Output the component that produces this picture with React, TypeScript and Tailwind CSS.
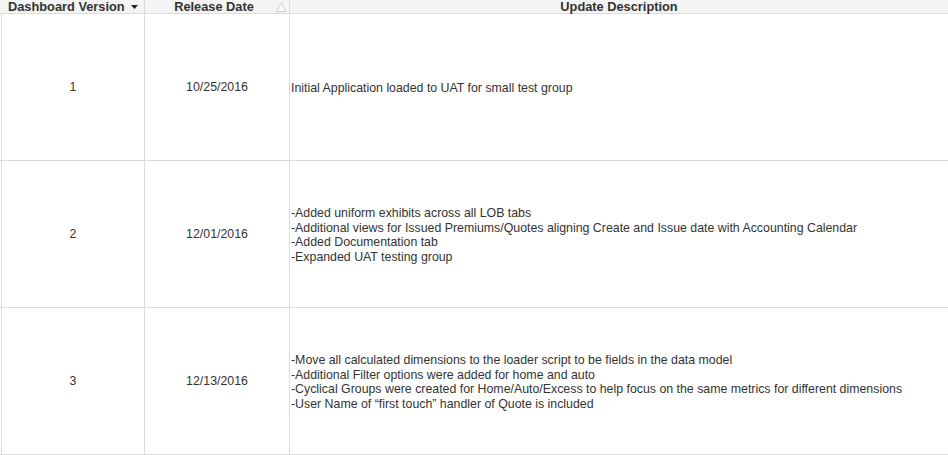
const rows = [
  {
    version: '1',
    date: '10/25/2016',
    lines: ['Initial Application loaded to UAT for small test group'],
  },
  {
    version: '2',
    date: '12/01/2016',
    lines: [
      '-Added uniform exhibits across all LOB tabs',
      '-Additional views for Issued Premiums/Quotes aligning Create and Issue date with Accounting Calendar',
      '-Added Documentation tab',
      '-Expanded UAT testing group',
    ],
  },
  {
    version: '3',
    date: '12/13/2016',
    lines: [
      '-Move all calculated dimensions to the loader script to be fields in the data model',
      '-Additional Filter options were added for home and auto',
      '-Cyclical Groups were created for Home/Auto/Excess to help focus on the same metrics for different dimensions',
      '-User Name of \u201cfirst touch\u201d handler of Quote is included',
    ],
  },
];

export default function App() {
  return (
    <div className="w-[948px] h-[455px] bg-white overflow-hidden font-['Liberation_Sans',Arial,sans-serif] text-[12.35px] text-[#333]">
      {/* header */}
      <div className="flex h-[14px] bg-[#f4f4f4] border-b border-[#dcdcdc] font-bold text-[12.8px] leading-[13px]">
        <div className="w-[145px] flex items-center pl-[8px] border-r border-[#dcdcdc]">
          <span>Dashboard Version</span>
          <svg className="ml-[6px] mt-px" width="7" height="4" viewBox="0 0 7 4">
            <path d="M0 0h7L3.5 4z" fill="#222" />
          </svg>
        </div>
        <div className="w-[145px] relative flex items-center justify-center border-r border-[#dcdcdc]">
          <span className="-ml-[6px]">Release Date</span>
          <svg className="absolute right-[3px] top-[2px]" width="10" height="10" viewBox="0 0 10 10">
            <path d="M5.5 0.5L9.5 9.5H0.5z" fill="#fafafa" stroke="#d0d0d0" strokeWidth="1" />
          </svg>
        </div>
        <div className="flex-1 flex items-center justify-center">Update Description</div>
      </div>

      {/* body */}
      {rows.map((r) => (
        <div key={r.version} className="flex h-[147px] border-b border-[#dcdcdc]">
          <div className="w-[144px] ml-px flex items-center justify-center border-r border-l border-[#dcdcdc]">
            {r.version}
          </div>
          <div className="w-[145px] flex items-center justify-center border-r border-[#dcdcdc]">
            {r.date}
          </div>
          <div className="flex-1 flex flex-col justify-center pl-[1px] pt-[2px] leading-[14.5px]">
            {r.lines.map((l) => (
              <div key={l} className="whitespace-nowrap">{l}</div>
            ))}
          </div>
        </div>
      ))}
    </div>
  );
}
